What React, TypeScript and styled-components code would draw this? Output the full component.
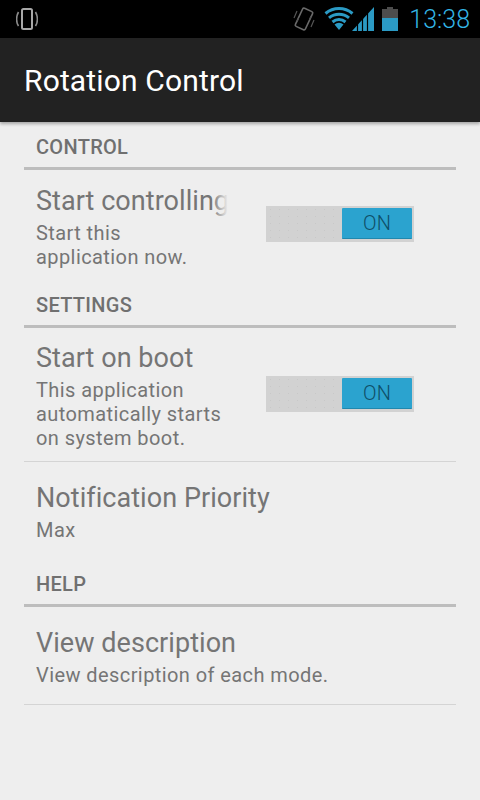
import { FunctionComponent } from "react";
import styled, { createGlobalStyle } from "styled-components";

const GlobalStyle = createGlobalStyle`
  html, body {
    margin: 0;
    padding: 0;
    background: #eeeeee;
  }
  body {
    font-family: Roboto, "Liberation Sans", sans-serif;
  }
`;

const Screen = styled.div`
  width: 480px;
  height: 800px;
  display: flex;
  flex-direction: column;
  overflow: hidden;
  background: #eeeeee;
`;
const StatusBar = styled.div`
  height: 38px;
  flex-shrink: 0;
  display: flex;
  align-items: center;
  justify-content: space-between;
  padding: 0 10px 0 16px;
  background: #000;
`;
const StatusRight = styled.div`
  display: flex;
  align-items: center;
`;
const Clock = styled.span`
  margin-left: 11px;
  font-size: 25px;
  font-weight: 300;
  color: #33b5e5;
`;
const ActionBar = styled.div`
  height: 84px;
  flex-shrink: 0;
  display: flex;
  align-items: center;
  padding-left: 24px;
  box-sizing: border-box;
  background: #222222;
  box-shadow: 0 2px 3px rgba(0, 0, 0, 0.3);
  font-size: 30px;
  letter-spacing: 0.15px;
  color: #fff;
`;
const List = styled.div`
  padding: 0 24px;
  display: flex;
  flex-direction: column;
`;
const SectionHeader = styled.div`
  height: 48px;
  display: flex;
  align-items: center;
  padding: 5px 12px 0;
  box-sizing: border-box;
  border-bottom: 3px solid #bdbdbd;
  font-size: 20px;
  font-weight: 500;
  letter-spacing: 0.3px;
  color: #707070;
`;
const Row = styled.div<{ $height: number; $divider?: boolean }>`
  height: ${(p) => p.$height}px;
  box-sizing: border-box;
  display: flex;
  align-items: center;
  padding: 0 12px;
  border-bottom: ${(p) => (p.$divider ? "1px solid #d4d4d4" : "none")};
`;
const RowText = styled.div<{ $narrow?: boolean }>`
  width: ${(p) => (p.$narrow ? "192px" : "auto")};
  flex-shrink: 0;
  position: relative;
  overflow: hidden;
`;
const Title = styled.div`
  margin-top: 1px;
  font-size: 27px;
  line-height: 36px;
  letter-spacing: 0.05px;
  white-space: nowrap;
  color: #757575;
`;
const Summary = styled.div`
  margin-top: 2px;
  max-width: 190px;
  font-size: 20px;
  line-height: 24px;
  letter-spacing: 0.42px;
  color: #757575;
`;
const WideSummary = styled(Summary)`
  max-width: none;
  white-space: nowrap;
`;
const TitleFade = styled.div`
  position: absolute;
  top: 0;
  right: 0;
  width: 16px;
  height: 37px;
  background: linear-gradient(to right, rgba(238, 238, 238, 0), #eeeeee);
`;
const SwitchTrack = styled.div`
  margin: 0 0 2px 38px;
  width: 148px;
  height: 36px;
  flex-shrink: 0;
  box-sizing: border-box;
  display: flex;
  justify-content: flex-end;
  padding: 2px;
  background-color: #d2d2d2;
  background-image: radial-gradient(#c8c8c8 0.7px, transparent 0.8px);
  background-size: 9px 7px;
`;
const SwitchThumb = styled.div`
  width: 70px;
  height: 31px;
  display: flex;
  align-items: center;
  justify-content: center;
  box-sizing: border-box;
  border-radius: 1px;
  border-bottom: 1px solid #2088ae;
  background: #2ba3cf;
  font-size: 20px;
  font-weight: 300;
  color: #0f4f68;
`;
const StatusVibrate = styled.div`
  display: flex;
  margin-right: 8px;
`;

const RotateIcon = () => (
  <svg width="22" height="24" viewBox="0 0 22 24" fill="none">
    <rect x="6" y="2" width="10" height="20" rx="1.500" stroke="#a8a8a8" strokeWidth="2" />
    <path d="M2.500 5C.2 9-.2 15 2.500 19M19.500 5c2.300 4 2.700 10 0 14" stroke="#8c8c8c" strokeWidth="1.600" />
  </svg>
);
const VibrateIcon = () => (
  <svg width="24" height="28" viewBox="0 0 24 28" fill="none">
    <rect x="6.500" y="4" width="11" height="20" rx="1.500" transform="rotate(25 12 14)" stroke="#6a6a6a" strokeWidth="1.600" />
    <path d="M2 13l3-7M5 17l1.500-4M22 15l-3 7M19 11l-1.500 4" stroke="#555555" strokeWidth="1.200" />
  </svg>
);
const WifiIcon = () => (
  <svg width="30" height="24" viewBox="0 0 30 24" fill="none">
    <path d="M15 23L10.500 17.500a7 7 0 0 1 9 0z" fill="#2b9ac4" />
    <path d="M8.500 15a10 10 0 0 1 13 0" stroke="#2b9ac4" strokeWidth="3" />
    <path d="M5 10.800a15.500 15.500 0 0 1 20 0" stroke="#2b9ac4" strokeWidth="3" />
    <path d="M1.500 6.500a21 21 0 0 1 27 0" stroke="#2b9ac4" strokeWidth="3" />
  </svg>
);
const SignalIcon = () => (
  <svg width="22" height="24" viewBox="0 0 22 24" style={{ marginLeft: -2 }}>
    <path d="M0 24L22 0v24z" fill="#2b9ac4" />
    <path d="M5.500 0v24M10.500 0v24M15.500 0v24" stroke="#000" strokeWidth="1.200" />
  </svg>
);
const BatteryIcon = () => (
  <svg width="16" height="24" viewBox="0 0 16 24" style={{ marginLeft: 8 }}>
    <path d="M5 0h6v2h5v9H0V2h5z" fill="#4d4d4d" />
    <rect y="11" width="16" height="13" fill="#2b9ac4" />
  </svg>
);

const Switch: FunctionComponent = () => (
  <SwitchTrack>
    <SwitchThumb>ON</SwitchThumb>
  </SwitchTrack>
);

const App: FunctionComponent = () => {
  return (
    <Screen>
      <GlobalStyle />
      <StatusBar>
        <RotateIcon />
        <StatusRight>
          <StatusVibrate>
            <VibrateIcon />
          </StatusVibrate>
          <WifiIcon />
          <SignalIcon />
          <BatteryIcon />
          <Clock>13:38</Clock>
        </StatusRight>
      </StatusBar>
      <ActionBar>Rotation Control</ActionBar>
      <List>
        <SectionHeader>CONTROL</SectionHeader>
        <Row $height={110}>
          <RowText $narrow>
            <Title>Start controlling</Title>
            <TitleFade />
            <Summary>Start this application now.</Summary>
          </RowText>
          <Switch />
        </Row>
        <SectionHeader>SETTINGS</SectionHeader>
        <Row $height={134} $divider>
          <RowText $narrow>
            <Title>Start on boot</Title>
            <Summary>This application automatically starts on system boot.</Summary>
          </RowText>
          <Switch />
        </Row>
        <Row $height={97}>
          <RowText>
            <Title>Notification Priority</Title>
            <WideSummary>Max</WideSummary>
          </RowText>
        </Row>
        <SectionHeader>HELP</SectionHeader>
        <Row $height={98} $divider>
          <RowText>
            <Title>View description</Title>
            <WideSummary>View description of each mode.</WideSummary>
          </RowText>
        </Row>
      </List>
    </Screen>
  );
};

export default App;
